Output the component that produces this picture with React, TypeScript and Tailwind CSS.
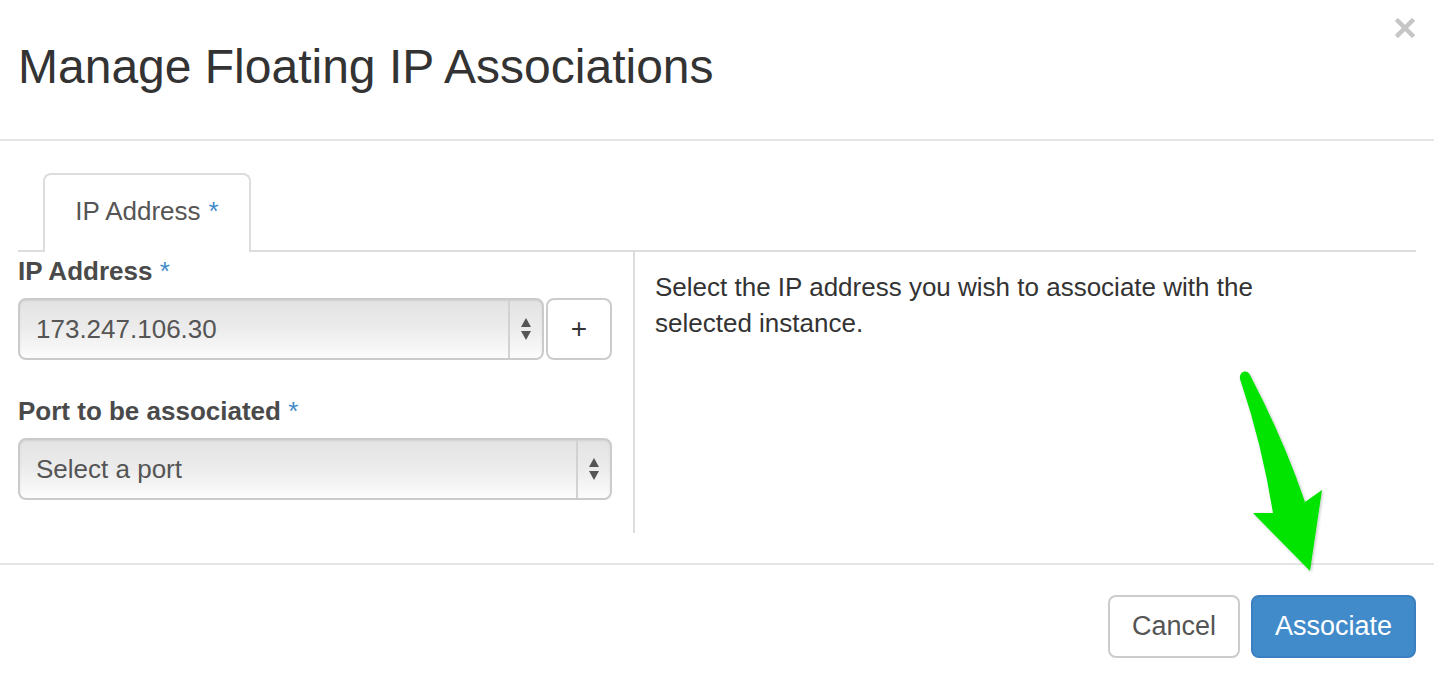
const font = { fontFamily: '"Liberation Sans", Arial, sans-serif' };

function Arrows() {
  return (
    <svg width="12" height="26" viewBox="0 0 12 26" aria-hidden="true">
      <path d="M6 2 L11 11 L1 11 Z" fill="#555" />
      <path d="M1 15 L11 15 L6 24 Z" fill="#555" />
    </svg>
  );
}

function FakeSelect({ value, className }: { value: string; className: string }) {
  return (
    <div
      className={`flex h-[62px] items-stretch rounded-[8px] border-2 border-[#cbcbcb] bg-gradient-to-b from-[#e3e3e3] via-[#ececec] to-[#fcfcfc] shadow-[inset_0_1px_2px_rgba(0,0,0,0.08)] ${className}`}
    >
      <div className="flex flex-1 items-center pl-[16px] text-[26px] text-[#555]">{value}</div>
      <div className="flex w-[34px] items-center justify-center border-l-2 border-[#d2d2d2]">
        <Arrows />
      </div>
    </div>
  );
}

export default function App() {
  return (
    <div className="relative h-[674px] w-[1434px] overflow-hidden bg-white text-[#333]" style={font}>
      {/* Header */}
      <div className="flex h-[141px] items-center justify-between border-b-2 border-[#e5e5e5] pl-[18px] pr-[19px]">
        <h1 className="mt-[-6px] text-[48px] leading-none text-[#333]">Manage Floating IP Associations</h1>
        <svg width="20" height="20" viewBox="0 0 20 20" className="mb-[84px]" aria-hidden="true">
          <path d="M3 3 L17 17 M17 3 L3 17" stroke="#c6c6c6" strokeWidth="4.5" strokeLinecap="square" />
        </svg>
      </div>

      {/* Body */}
      <div className="px-[18px] pt-[32px]">
        <div className="flex border-b-2 border-[#dddddd]">
          <div className="ml-[25px] mb-[-2px] flex h-[79px] w-[208px] items-center justify-center rounded-t-[8px] border-2 border-b-0 border-[#dddddd] bg-white pb-[4px] text-[26px] text-[#555]">
            IP Address <span className="ml-[8px] text-[#428bca]">*</span>
          </div>
        </div>

        <div className="flex">
          <div className="w-[594px]">
            <div className="pt-[1px] text-[26px] font-bold leading-[36px] text-[#4a4a4a]">
              IP Address <span className="font-normal text-[#428bca]">*</span>
            </div>
            <div className="mt-[9px] flex gap-[2px]">
              <FakeSelect value="173.247.106.30" className="w-[526px]" />
              <div className="flex h-[62px] w-[66px] items-center justify-center rounded-[8px] border-2 border-[#cccccc] bg-white text-[28px] text-[#333]">
                +
              </div>
            </div>
            <div className="mt-[33px] text-[26px] font-bold leading-[36px] text-[#4a4a4a]">
              Port to be associated <span className="font-normal text-[#428bca]">*</span>
            </div>
            <FakeSelect value="Select a port" className="mt-[9px] w-[594px]" />
          </div>
          <div className="ml-[21px] h-[281px] w-[2px] bg-[#dddddd]" />
          <p className="pl-[20px] pt-[17px] text-[26px] leading-[36px] text-[#333]">
            Select the IP address you wish to associate with the
            <br />
            selected instance.
          </p>
        </div>
      </div>

      {/* Footer */}
      <div className="mt-[30px] flex justify-end gap-[11px] border-t-2 border-[#e5e5e5] pr-[18px] pt-[30px]">
        <div className="flex h-[63px] w-[132px] items-center justify-center rounded-[8px] border-2 border-[#cccccc] bg-white text-[27px] text-[#555]">
          Cancel
        </div>
        <div className="flex h-[63px] w-[165px] items-center justify-center rounded-[8px] border-2 border-[#3a7fc0] bg-[#428bca] text-[27px] text-white">
          Associate
        </div>
      </div>

      {/* Green annotation arrow */}
      <svg className="pointer-events-none absolute left-0 top-0" width="1434" height="674" aria-hidden="true">
        <defs>
          <filter id="sh" x="-20%" y="-20%" width="140%" height="140%">
            <feDropShadow dx="1" dy="1" stdDeviation="1.5" floodColor="#000" floodOpacity="0.25" />
          </filter>
        </defs>
        <path
          d="M1240,379 C1239,371 1247,369 1250,375 Q1284,440 1305,502 L1322,490 L1310,571 L1253,513 L1273,513 Q1262,444 1240,379 Z"
          fill="#00e400"
          filter="url(#sh)"
        />
      </svg>
    </div>
  );
}
